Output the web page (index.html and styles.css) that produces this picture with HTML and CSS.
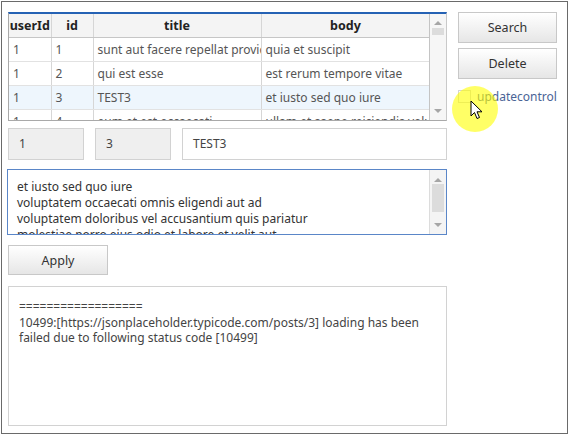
FILE: index.html
```html
<!DOCTYPE html>
<html lang="en">
<head>
  <meta charset="UTF-8" />
  <title>Posts</title>
  <link rel="stylesheet" href="styles.css">
</head>
<body>

<div class="frame">
  <div class="main">

    <!-- Posts grid -->
    <div class="grid">
      <div class="grid-body">
        <table>
          <colgroup>
            <col class="c-user"><col class="c-id"><col class="c-title"><col class="c-body">
          </colgroup>
          <thead>
            <tr><th>userId</th><th>id</th><th>title</th><th>body</th></tr>
          </thead>
          <tbody>
            <tr><td>1</td><td>1</td><td>sunt aut facere repellat provident occaecati excepturi optio reprehenderit</td><td>quia et suscipit</td></tr>
            <tr><td>1</td><td>2</td><td>qui est esse</td><td>est rerum tempore vitae</td></tr>
            <tr class="selected"><td>1</td><td>3</td><td>TEST3</td><td>et iusto sed quo iure</td></tr>
            <tr><td>1</td><td>4</td><td>eum et est occaecati</td><td>ullam et saepe reiciendis voluptatem adipisci</td></tr>
          </tbody>
        </table>
      </div>
      <div class="vscroll">
        <span class="arrow up"></span>
        <span class="thumb small"></span>
        <span class="arrow down"></span>
      </div>
    </div>

    <div class="fields">
      <div class="field readonly f-user">1</div>
      <div class="field readonly f-id">3</div>
      <div class="field f-title">TEST3</div>
    </div>

    <div class="memo">
      <div class="memo-text">et iusto sed quo iure
voluptatem occaecati omnis eligendi aut ad
voluptatem doloribus vel accusantium quis pariatur
molestiae porro eius odio et labore et velit aut</div>
      <div class="vscroll">
        <span class="arrow up"></span>
        <span class="thumb tall"></span>
        <span class="arrow down"></span>
      </div>
    </div>

    <button class="btn apply">Apply</button>

    <div class="log">==================
10499:[https://jsonplaceholder.typicode.com/posts/3] loading has been
failed due to following status code [10499]</div>
  </div>

  <div class="side">
    <button class="btn">Search</button>
    <button class="btn">Delete</button>
    <label class="check"><span class="box"></span>updatecontrol</label>
  </div>

  <!-- mouse highlight -->
  <div class="cursor-spot"></div>
  <svg class="cursor" width="14" height="20" viewBox="0 0 14 20">
    <path d="M1 1 L1 16 L4.5 12.5 L7 18.5 L9.5 17.5 L7 11.8 L12 11.8 Z" fill="#fff" stroke="#000" stroke-width="1" stroke-linejoin="round"/>
  </svg>
</div>

</body>
</html>
```

FILE: styles.css
```css
body {
  margin: 0;
  padding: 0;
  background: #fff;
  font-family: "Noto Sans", "Open Sans", sans-serif;
  font-size: 12px;
  color: #444;
}

.frame {
  position: relative;
  box-sizing: border-box;
  margin: 1px 0 0 1px;
  width: 567px;
  height: 433px;
  border: 1px solid #6a6a6a;
  padding: 10px 0 0 6px;
  display: flex;
  gap: 11px;
}

.main {
  width: 439px;
  display: flex;
  flex-direction: column;
}

/* grid */
.grid {
  box-sizing: border-box;
  height: 109px;
  display: flex;
  border-top: 2px solid #2562b4;
  border-left: 1px solid #a9a9a9;
  border-right: 1px solid #c9c9c9;
  border-bottom: 1px solid #a9a9a9;
  overflow: hidden;
}

.grid-body {
  width: 421px;
  overflow: hidden;
}

table {
  border-collapse: collapse;
  table-layout: fixed;
  width: 421px;
}

.c-user { width: 42px; }
.c-id { width: 42px; }
.c-title { width: 168px; }
.c-body { width: 169px; }

th, td {
  white-space: nowrap;
  overflow: hidden;
  border-right: 1px solid #d6d6d6;
  padding: 0 4px;
}

th {
  height: 23px;
  padding: 0;
  background: #f4f4f4;
  font-weight: bold;
  color: #222;
  border-bottom: 1px solid #c6c6c6;
  font-size: 12.5px;
}

td {
  height: 23px;
  border-bottom: 1px solid #e2e2e2;
  color: #555;
}

tr.selected td {
  background: #eef6fd;
}

.vscroll {
  position: relative;
  width: 16px;
  flex: none;
  background: #f6f6f6;
  border-left: 1px solid #c4c4c4;
}

.arrow {
  position: absolute;
  left: 4px;
  width: 0;
  height: 0;
  border-left: 4px solid transparent;
  border-right: 4px solid transparent;
}

.arrow.up {
  top: 7px;
  border-bottom: 4px solid #a6a6a6;
}

.arrow.down {
  bottom: 7px;
  border-top: 4px solid #a6a6a6;
}

.thumb {
  position: absolute;
  left: 2px;
  width: 12px;
  background: #dcdcdc;
}

.thumb.small { top: 14px; height: 7px; }
.thumb.tall { top: 14px; height: 28px; }

/* edit fields */
.fields {
  display: flex;
  gap: 11px;
  margin-top: 7px;
}

.field {
  box-sizing: border-box;
  height: 32px;
  line-height: 30px;
  padding: 0 10px;
  border: 1px solid #d2d2d2;
  background: #fff;
  color: #444;
}

.field.readonly { background: #efefef; }
.f-user { width: 76px; }
.f-id { width: 76px; }
.f-title { flex: 1; }

.memo {
  box-sizing: border-box;
  display: flex;
  height: 66px;
  margin-top: 9px;
  margin-left: -1px;
  border: 1px solid #5a86c8;
  overflow: hidden;
}

.memo-text {
  flex: 1;
  padding: 9px 9px 0;
  white-space: pre;
  overflow: hidden;
  line-height: 16px;
  color: #333;
}

.memo .vscroll { border-left-color: #dcdcdc; background: #f4f4f4; }
.memo .arrow.up { top: 8px; }

.btn {
  box-sizing: border-box;
  width: 100px;
  height: 31px;
  border: 1px solid #c8c8c8;
  background: linear-gradient(#ffffff, #e6e6e6);
  font-family: inherit;
  font-size: 12.5px;
  color: #333;
  padding: 0;
}

.apply {
  margin-top: 10px;
  height: 30px;
}

.log {
  box-sizing: border-box;
  height: 140px;
  margin-top: 11px;
  border: 1px solid #d2d2d2;
  padding: 12px 10px;
  white-space: pre;
  line-height: 15.5px;
  color: #444;
}

/* right column */
.side {
  width: 99px;
  display: flex;
  flex-direction: column;
  gap: 5px;
}

.side .btn { width: 99px; }

.check {
  display: flex;
  align-items: center;
  gap: 6px;
  margin-top: 4px;
  color: #4a6496;
  font-size: 12px;
}

.check .box {
  box-sizing: border-box;
  width: 13px;
  height: 13px;
  border: 1px solid #d4d4d4;
  background: #fff;
}

.cursor-spot {
  position: absolute;
  left: 450px;
  top: 84px;
  width: 46px;
  height: 46px;
  border-radius: 50%;
  background: rgba(255, 255, 0, 0.6);
}

.cursor {
  position: absolute;
  left: 468px;
  top: 98px;
}
```
